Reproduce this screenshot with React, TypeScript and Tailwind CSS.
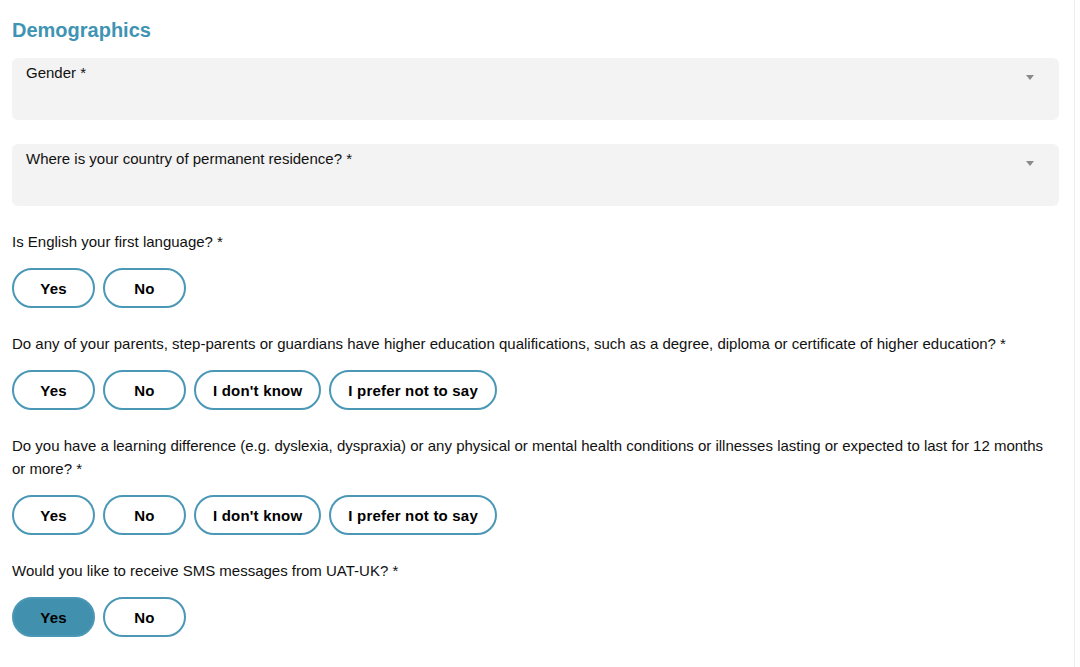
import { useState } from "react";

const font = { fontFamily: '"Liberation Sans", Arial, sans-serif' };

function SelectBox({ label }: { label: string }) {
    return (
        <div className="relative h-[62px] w-full rounded-md bg-[#f3f3f3] px-[14px] pt-[3px]">
            <span className="text-[15px] leading-[22px] text-[#111]">{label}</span>
            {/* caret */}
            <span className="absolute right-[25px] top-[17px] h-0 w-0 border-x-[4px] border-t-[5px] border-x-transparent border-t-[#8a8a8a]" />
        </div>
    );
}

function Choice({
    options,
    value,
    onPick,
}: {
    options: string[];
    value?: string;
    onPick: (v: string) => void;
}) {
    return (
        <div className="flex gap-2 mt-[15px]">
            {options.map((o) => (
                <button
                    key={o}
                    onClick={() => onPick(o)}
                    className={
                        "h-10 min-w-[83px] rounded-full border-2 border-[#4a97b6] px-[17px] text-[15px] font-bold tracking-[0.2px] text-black " +
                        (value === o ? "bg-[#4190ad]" : "bg-white")
                    }
                >
                    {o}
                </button>
            ))}
        </div>
    );
}

export default function App() {
    const [answers, setAnswers] = useState<Record<string, string>>({ sms: "Yes" });
    const pick = (k: string) => (v: string) => setAnswers({ ...answers, [k]: v });
    const four = ["Yes", "No", "I don't know", "I prefer not to say"];

    return (
        <div className="min-h-[667px] bg-white" style={font}>
            <div className="w-[1075px] min-h-[667px] border-r border-[#ececec] pl-3 pr-[15px] pt-[17px]">
                <h2 className="text-[20px] font-bold leading-[26px] text-[#3f94b4]">Demographics</h2>

                <div className="mt-[15px] flex flex-col gap-6">
                    <SelectBox label="Gender *" />
                    <SelectBox label="Where is your country of permanent residence? *" />
                </div>

                <div className="mt-6 text-[15px] leading-[23px] text-[#111]">
                    <p>Is English your first language? *</p>
                    <Choice options={["Yes", "No"]} value={answers.english} onPick={pick("english")} />

                    <p className="mt-6">
                        Do any of your parents, step-parents or guardians have higher education qualifications, such as a degree, diploma or certificate of higher education? *
                    </p>
                    <Choice options={four} value={answers.parents} onPick={pick("parents")} />

                    <p className="mt-6">
                        Do you have a learning difference (e.g. dyslexia, dyspraxia) or any physical or mental health conditions or illnesses lasting or expected to last for 12 months or more? *
                    </p>
                    <Choice options={four} value={answers.health} onPick={pick("health")} />

                    <p className="mt-6">Would you like to receive SMS messages from UAT-UK? *</p>
                    <Choice options={["Yes", "No"]} value={answers.sms} onPick={pick("sms")} />
                </div>
            </div>
        </div>
    );
}
